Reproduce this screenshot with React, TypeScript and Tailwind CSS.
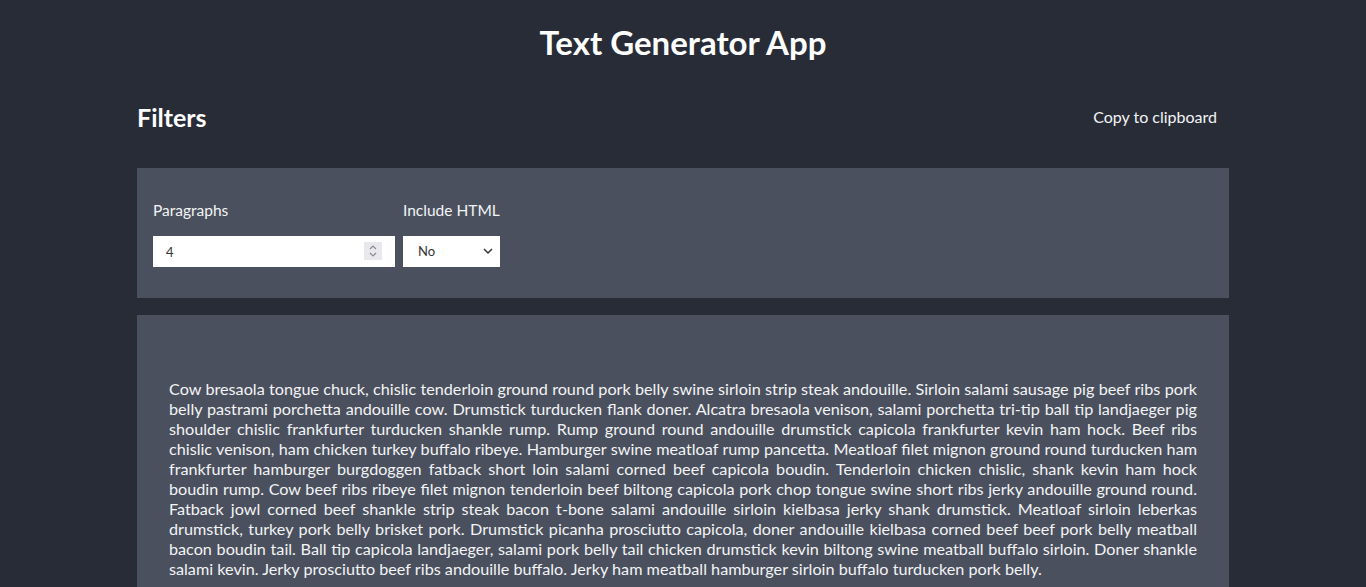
import { useState } from "react";

const text =
  "Cow bresaola tongue chuck, chislic tenderloin ground round pork belly swine sirloin strip steak andouille. Sirloin salami sausage pig beef ribs pork belly pastrami porchetta andouille cow. Drumstick turducken flank doner. Alcatra bresaola venison, salami porchetta tri-tip ball tip landjaeger pig shoulder chislic frankfurter turducken shankle rump. Rump ground round andouille drumstick capicola frankfurter kevin ham hock. Beef ribs chislic venison, ham chicken turkey buffalo ribeye. Hamburger swine meatloaf rump pancetta. Meatloaf filet mignon ground round turducken ham frankfurter hamburger burgdoggen fatback short loin salami corned beef capicola boudin. Tenderloin chicken chislic, shank kevin ham hock boudin rump. Cow beef ribs ribeye filet mignon tenderloin beef biltong capicola pork chop tongue swine short ribs jerky andouille ground round. Fatback jowl corned beef shankle strip steak bacon t-bone salami andouille sirloin kielbasa jerky shank drumstick. Meatloaf sirloin leberkas drumstick, turkey pork belly brisket pork. Drumstick picanha prosciutto capicola, doner andouille kielbasa corned beef beef pork belly meatball bacon boudin tail. Ball tip capicola landjaeger, salami pork belly tail chicken drumstick kevin biltong swine meatball buffalo sirloin. Doner shankle salami kevin. Jerky prosciutto beef ribs andouille buffalo. Jerky ham meatball hamburger sirloin buffalo turducken pork belly.";

export default function App() {
  const [paragraphs, setParagraphs] = useState("4");
  const [html, setHtml] = useState("No");

  return (
    <div
      className="min-h-screen bg-[#282c36] text-white"
      style={{ fontFamily: 'Lato, "Noto Sans", sans-serif' }}
    >
      <div className="mx-auto w-[1092px]">
        <h1 className="pt-[22px] text-center text-[33px] font-bold leading-[40px]">
          Text Generator App
        </h1>
        <div className="mt-[40px] flex items-center justify-between">
          <h2 className="text-[25px] font-bold leading-[30px]">Filters</h2>
          <button className="mr-3 text-[16px] text-gray-100">Copy to clipboard</button>
        </div>
        <div className="mt-[36px] flex gap-2 bg-[#4a505d] px-4 pt-[30px] pb-[31px]">
          <div className="flex flex-col">
            <label className="text-[15.5px] leading-[24px] text-gray-100">Paragraphs</label>
            <div className="relative mt-[14px]">
              <input
                type="text"
                value={paragraphs}
                onChange={(e) => setParagraphs(e.target.value)}
                className="h-[31px] w-[242px] bg-white px-[13px] text-[13px] text-[#333] outline-none"
              />
              <div className="absolute right-[13px] top-[6px] flex h-[18px] w-[18px] flex-col items-center justify-center bg-[#e9e9ed]">
                <svg width="10" height="14" viewBox="0 0 10 14" fill="none" stroke="#8a8a90" strokeWidth="1.2">
                  <path d="M2 5 L5 2 L8 5" />
                  <path d="M2 9 L5 12 L8 9" />
                </svg>
              </div>
            </div>
          </div>
          <div className="flex flex-col">
            <label className="text-[15.5px] leading-[24px] text-gray-100">Include HTML</label>
            <div className="relative mt-[14px]">
              <select
                value={html}
                onChange={(e) => setHtml(e.target.value)}
                className="h-[31px] w-[97px] appearance-none bg-white pl-[15px] text-[13px] text-[#333] outline-none"
              >
                <option>No</option>
                <option>Yes</option>
              </select>
              <svg
                className="pointer-events-none absolute right-[7px] top-[12px]"
                width="10"
                height="7"
                viewBox="0 0 10 7"
                fill="none"
                stroke="#333"
                strokeWidth="1.5"
              >
                <path d="M1 1 L5 5 L9 1" />
              </svg>
            </div>
          </div>
        </div>
        <div className="mt-[17px] bg-[#4a505d] px-8 pt-[64px] pb-8">
          <p className="text-justify text-[16.2px] leading-[20px] text-gray-100">{text}</p>
        </div>
      </div>
    </div>
  );
}
